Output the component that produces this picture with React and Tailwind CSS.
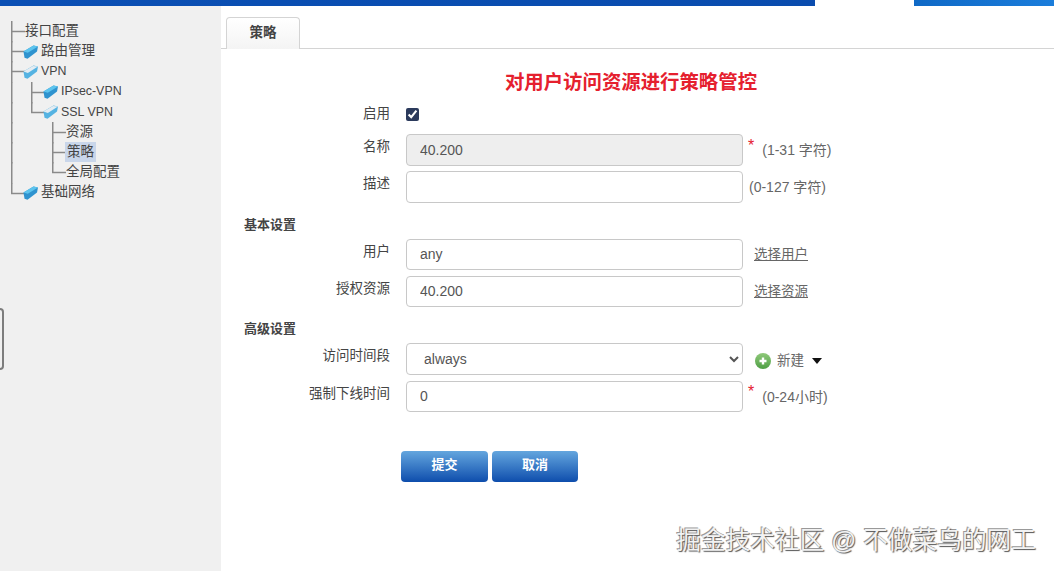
import React from 'react';

const FONT = "font-['Liberation_Sans','Noto_Sans_CJK_SC',sans-serif]";

const Cell = ({ type, width }) => {
    return (
        <svg width={width} height="20" className="block shrink-0 overflow-visible" stroke="#8a8a8a" strokeWidth="1.5" fill="none">
            {type === 'tee' && <path d="M0.75 0V21.5M0.75 10.5H14" />}
            {type === 'corner' && <path d="M0.75 0V10.5H14" />}
            {type === 'line' && <path d="M0.75 0V21.5" />}
        </svg>
    );
};

const FolderIcon = ({ open }) => {
    return (
        <svg width="15" height="14" viewBox="0 0 15 14" className="block shrink-0 mr-[3px] -ml-[1px] mt-[1px]">
            <path d="M0.5 6.5 L10.5 0.5 L15 1.5 L14 6.5 L4.5 13.8 L1.5 12.8 Z" fill={open ? '#55b3e2' : '#2f93cf'} />
            {open ? (
                <path d="M0.5 6.5 L10 1 L15 1.5 L4.8 8 Z" fill="#e4ecf2" />
            ) : (
                <path d="M0.5 6.5 L10.5 0.5 L15 1.5 L4.8 7.8 Z" fill="#5cc4ee" />
            )}
        </svg>
    );
};

const TreeRow = ({ cells, folder, open, selected, latin, label }) => {
    return (
        <div className="flex items-center h-[20.2px]">
            {cells.map((c, i) => (
                <Cell key={i} type={c[0]} width={c[1]} />
            ))}
            {folder && <FolderIcon open={open} />}
            <span className={selected ? 'px-[2px] -ml-[1px] h-[20px] leading-[20px] bg-[#c9d6ea]' : latin ? 'text-[12.4px]' : ''}>{label}</span>
        </div>
    );
};

const Row = ({ label, height, className, labelClass = '-mt-[5px]', children }) => {
    return (
        <div className={`flex items-center ${className}`} style={{ height }}>
            <label className={`w-[169px] text-right text-[13.5px] text-[#444] ${labelClass}`}>{label}</label>
            <div className="ml-[16px] flex items-center">{children}</div>
        </div>
    );
};

const TextInput = ({ value, height, disabled }) => {
    return (
        <input
            readOnly
            value={value}
            disabled={disabled}
            style={{ height }}
            className={`w-[337px] rounded border border-[#c8c8c8] px-[13px] pb-[1px] text-[14px] text-[#555] opacity-100 ${disabled ? 'bg-[#eeeeee]' : 'bg-white'}`}
        />
    );
};

const App = () => {
    return (
        <div className={`relative h-[571px] w-full overflow-hidden bg-white ${FONT}`}>
            <div className="flex h-[6px]">
                <div className="w-[815px] bg-gradient-to-r from-[#0a4fb4] to-[#0a4cae]"></div>
                <div className="w-[99px] bg-white"></div>
                <div className="flex-1 bg-gradient-to-r from-[#0f69c6] to-[#1b7ddb]"></div>
            </div>

            <div className="flex h-[565px]">
                <div className="w-[221px] shrink-0 bg-[#f0f0f0] pl-[11px] pt-[15px] text-[13.5px] text-[#444]">
                    <TreeRow cells={[['tee', 14]]} label="接口配置" />
                    <TreeRow cells={[['tee', 13]]} folder label="路由管理" />
                    <TreeRow cells={[['tee', 13]]} folder open latin label="VPN" />
                    <TreeRow cells={[['line', 20], ['tee', 13]]} folder latin label="IPsec-VPN" />
                    <TreeRow cells={[['line', 20], ['corner', 13]]} folder open latin label="SSL VPN" />
                    <TreeRow cells={[['line', 20], ['', 21], ['tee', 14]]} label="资源" />
                    <TreeRow cells={[['line', 20], ['', 21], ['tee', 14]]} selected label="策略" />
                    <TreeRow cells={[['line', 20], ['', 21], ['corner', 14]]} label="全局配置" />
                    <TreeRow cells={[['corner', 13]]} folder label="基础网络" />
                </div>

                <div className="flex-1">
                    <div className="h-[43px] border-b border-[#d4d4d4] pt-[11px] pl-[5px]">
                        <div className="flex h-[32px] w-[74px] items-center justify-center rounded-t border border-b-0 border-[#d4d4d4] bg-gradient-to-b from-white to-[#f4f4f4] text-[13.5px] font-bold text-[#444]">
                            策略
                        </div>
                    </div>

                    <div className="mt-[20px] h-[26px] w-[820px] text-center text-[19.4px] leading-[26px] font-bold text-[#e5202e]">
                        对用户访问资源进行策略管控
                    </div>

                    <Row label="启用" height={20} className="mt-[9px]" labelClass="mt-[1px]">
                        <input type="checkbox" defaultChecked className="m-0 h-[13px] w-[13px] accent-[#2b3a5c]" />
                    </Row>
                    <Row label="名称" height={32} className="mt-[10px]">
                        <TextInput value="40.200" height={32} disabled />
                        <span className="ml-[5px] -mt-[9px] text-[16px] text-[#e5202e]">*</span>
                        <span className="ml-[8px] mt-[1px] text-[14px] text-[#666]">(1-31 字符)</span>
                    </Row>
                    <Row label="描述" height={32} className="mt-[5px]">
                        <TextInput value="" height={32} />
                        <span className="ml-[6px] text-[14px] text-[#666]">(0-127 字符)</span>
                    </Row>

                    <div className="mt-[12px] h-[20px] pl-[23px] text-[13px] leading-[20px] font-bold text-[#444]">基本设置</div>

                    <Row label="用户" height={31} className="mt-[4px]">
                        <TextInput value="any" height={31} />
                        <a className="ml-[11px] mt-[2px] text-[13.5px] text-[#666] underline">选择用户</a>
                    </Row>
                    <Row label="授权资源" height={31} className="mt-[6px]">
                        <TextInput value="40.200" height={31} />
                        <a className="ml-[11px] mt-[2px] text-[13.5px] text-[#666] underline">选择资源</a>
                    </Row>

                    <div className="mt-[12px] h-[20px] pl-[23px] text-[13px] leading-[20px] font-bold text-[#444]">高级设置</div>

                    <Row label="访问时间段" height={32} className="mt-[4px]">
                        <select className="h-[32px] w-[337px] rounded border border-[#c8c8c8] bg-white pl-[13px] text-[14px] text-[#555]">
                            <option>always</option>
                        </select>
                        <svg width="16" height="16" viewBox="0 0 16 16" className="ml-[12px] mt-[3px]">
                            <defs>
                                <linearGradient id="plusGreen" x1="0" y1="0" x2="0" y2="1">
                                    <stop offset="0" stopColor="#8fc97a" />
                                    <stop offset="1" stopColor="#4f9f45" />
                                </linearGradient>
                            </defs>
                            <circle cx="8" cy="8" r="8" fill="url(#plusGreen)" />
                            <path d="M8 4.5V11.5M4.5 8H11.5" stroke="#fff" strokeWidth="2.4" />
                        </svg>
                        <span className="ml-[6px] mt-[5px] text-[13.5px] text-[#666]">新建</span>
                        <svg width="10" height="6" viewBox="0 0 10 6" className="ml-[8px] mt-[3px]">
                            <path d="M0 0H10L5 6Z" fill="#111" />
                        </svg>
                    </Row>
                    <Row label="强制下线时间" height={31} className="mt-[6px]">
                        <TextInput value="0" height={31} />
                        <span className="ml-[5px] -mt-[9px] text-[16px] text-[#e5202e]">*</span>
                        <span className="ml-[8px] mt-[1px] text-[14px] text-[#666]">(0-24小时)</span>
                    </Row>

                    <div className="mt-[39px] ml-[180px] flex gap-[4px]">
                        <button className="h-[31px] w-[87px] rounded bg-gradient-to-b from-[#64a6de] to-[#0d4dac] pb-[3px] text-[13px] font-bold text-white">提交</button>
                        <button className="h-[31px] w-[86px] rounded bg-gradient-to-b from-[#64a6de] to-[#0d4dac] pb-[3px] text-[13px] font-bold text-white">取消</button>
                    </div>
                </div>
            </div>

            <div className="absolute left-0 top-[308px] h-[62px] w-[4px] rounded-r border-y-2 border-r-2 border-[#7d7d7d]"></div>

            <div className="absolute right-[18px] top-[524px] text-[24.7px] leading-[34px] whitespace-nowrap text-[#f2f2f2] [text-shadow:1px_1px_1px_#555,-1px_-1px_0_#999]">
                掘金技术社区 @ 不做菜鸟的网工
            </div>
        </div>
    );
}

export default App;
